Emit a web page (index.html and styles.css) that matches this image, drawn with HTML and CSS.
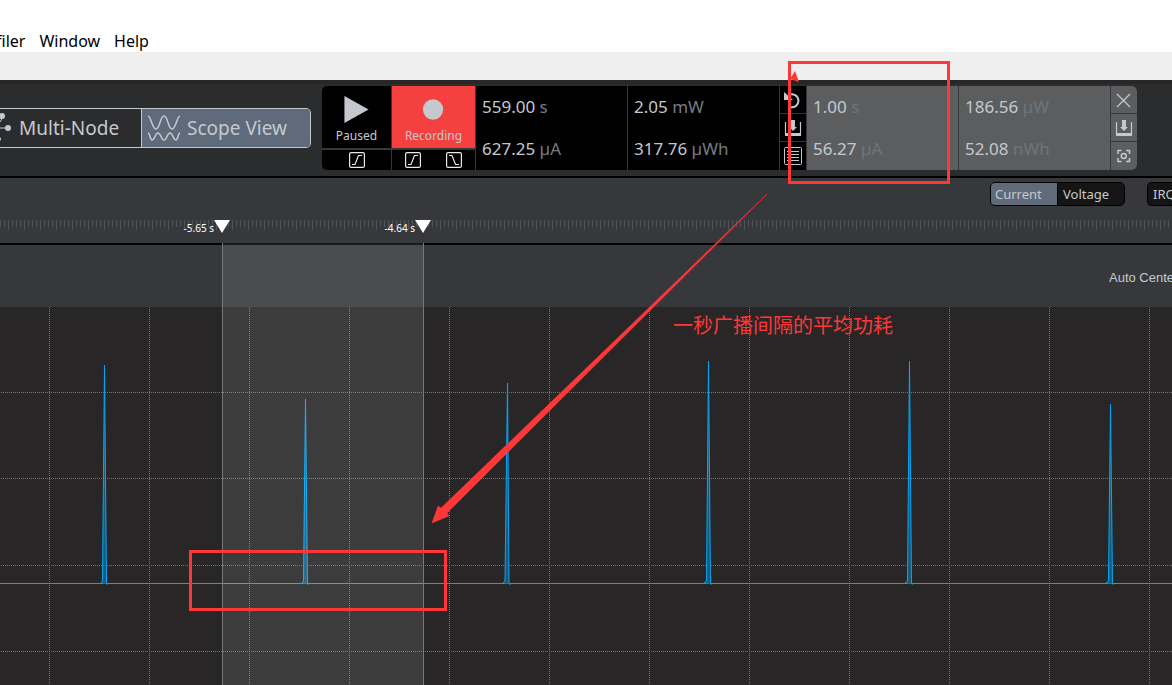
FILE: index.html
```
<!DOCTYPE html>
<html lang="en">
<head>
    <meta charset="UTF-8">
    <meta name="viewport" content="width=device-width, initial-scale=1.0">
    <title>Energy Profiler - Scope View</title>
    <link rel="stylesheet" href="styles.css">
</head>
<body>
    <nav class="menubar">
        <a href="#">filer</a>
        <a href="#">Window</a>
        <a href="#">Help</a>
    </nav>
    <div class="strip"></div>

    <header class="toolbar">
        <div class="tabs">
            <button class="tab tab-left">
                <svg width="12" height="32" viewBox="0 0 12 32">
                    <path d="M0 10 L3 5 M0 16 H8" stroke="#c5c9ce" fill="none"/>
                    <circle cx="2" cy="4" r="3" fill="#c5c9ce"/>
                    <circle cx="8" cy="16" r="3" fill="#c5c9ce"/>
                    <circle cx="-1" cy="27" r="2" fill="#c5c9ce"/>
                </svg>
                Multi-Node
            </button>
            <button class="tab active">
                <svg width="34" height="28" viewBox="0 0 34 28">
                    <path d="M1 2 C4 2 5 15 9 15 C13 15 13 2 17 2 C21 2 21 15 25 15 C29 15 30 2 33 2" stroke="#c5c9ce" stroke-width="1.5" fill="none"/>
                    <path d="M1 19 C3 19 3 26 5 26 C8 26 8 19 11 19 C14 19 14 26 17 26 C20 26 20 19 23 19 C26 19 26 26 29 26 C31 26 31 19 33 19" stroke="#c5c9ce" stroke-width="1.5" fill="none"/>
                </svg>
                Scope View
            </button>
        </div>

        <div class="panel">
            <div class="control control-play">
                <button class="action">
                    <svg width="28" height="30" viewBox="0 0 28 30"><path d="M1 1 L26 15 L1 29 Z" fill="#c5c9ce"/></svg>
                    Paused
                </button>
                <div class="triggers">
                    <button aria-label="Start on rising edge">
                        <svg width="16" height="16" viewBox="0 0 16 16"><use href="#rising"/></svg>
                    </button>
                </div>
            </div>
            <div class="control control-record">
                <button class="action recording">
                    <svg width="28" height="30" viewBox="0 0 28 30"><circle cx="13" cy="15" r="10.500" fill="#c5c9ce"/></svg>
                    Recording
                </button>
                <div class="triggers">
                    <button aria-label="Record on rising edge">
                        <svg width="16" height="16" viewBox="0 0 16 16"><use href="#rising"/></svg>
                    </button>
                    <button aria-label="Record on falling edge">
                        <svg width="16" height="16" viewBox="0 0 16 16"><use href="#falling"/></svg>
                    </button>
                </div>
            </div>
            <div class="values">
                <p>559.00 <span>s</span></p>
                <p>627.25 <span>µA</span></p>
            </div>
            <div class="values">
                <p>2.05 <span>mW</span></p>
                <p>317.76 <span>µWh</span></p>
            </div>
            <div class="tools">
                <button aria-label="Reset">
                    <svg width="18" height="18" viewBox="0 0 18 18">
                        <path d="M5 4 A6.500 6.500 0 1 1 6 16" stroke="#c5c9ce" stroke-width="2" fill="none"/>
                        <path d="M0 1 V9 H9 Z" fill="#c5c9ce"/>
                    </svg>
                </button>
                <button aria-label="Save">
                    <svg width="18" height="18" viewBox="0 0 18 18"><use href="#save"/></svg>
                </button>
                <button aria-label="Details">
                    <svg width="18" height="18" viewBox="0 0 18 18">
                        <rect x="0.500" y="0.500" width="17" height="17" rx="1" stroke="#c5c9ce" fill="none"/>
                        <path d="M3 4.500 h2 M6 4.500 h9 M3 7.500 h2 M6 7.500 h9 M3 10.500 h2 M6 10.500 h9 M3 13.500 h2 M6 13.500 h9" stroke="#c5c9ce"/>
                    </svg>
                </button>
            </div>
            <div class="values range">
                <p>1.00 <span>s</span></p>
                <p>56.27 <span>µA</span></p>
            </div>
            <div class="values range">
                <p>186.56 <span>µW</span></p>
                <p>52.08 <span>nWh</span></p>
            </div>
            <div class="tools range">
                <button aria-label="Close">
                    <svg width="18" height="18" viewBox="0 0 18 18"><path d="M2 3 L15 16 M15 3 L2 16" stroke="#c5c9ce" stroke-width="1.300"/></svg>
                </button>
                <button aria-label="Save range">
                    <svg width="18" height="18" viewBox="0 0 18 18"><use href="#save"/></svg>
                </button>
                <button aria-label="Zoom to range">
                    <svg width="18" height="18" viewBox="0 0 18 18">
                        <path d="M3 7 V3.500 H6.500 M11 3.500 H14.500 V7 M14.500 11 V14.500 H11 M6.500 14.500 H3 V11" stroke="#c5c9ce" stroke-width="1.500" fill="none"/>
                        <circle cx="8.750" cy="9" r="2.500" stroke="#c5c9ce" stroke-width="1.500" fill="none"/>
                    </svg>
                </button>
            </div>
        </div>
    </header>

    <main class="scope">
        <div class="options">
            <div class="toggle">
                <button class="active">Current</button>
                <button>Voltage</button>
            </div>
            <div class="toggle irq">
                <button>IRQ</button>
            </div>
        </div>
        <div class="ruler"></div>
        <div class="chart-head"><span>Auto Center</span></div>
        <svg class="plot" height="378">
            <defs>
                <pattern id="columns" x="49" width="100" height="2" patternUnits="userSpaceOnUse">
                    <rect width="1" height="1" fill="#757475"/>
                </pattern>
            </defs>
            <rect width="100%" height="100%" fill="url(#columns)"/>
            <g class="rows">
                <line x1="1" x2="100%" y1="85.500" y2="85.500"/>
                <line x1="1" x2="100%" y1="171.500" y2="171.500"/>
                <line x1="1" x2="100%" y1="258.500" y2="258.500"/>
                <line x1="1" x2="100%" y1="344.500" y2="344.500"/>
            </g>
            <line class="base" x1="0" x2="100%" y1="276.500" y2="276.500"/>
            <g class="spikes">
                <path d="M101 276 L102.500 274 L104.500 58 L106.500 277 H108"/>
                <path d="M302 276 L303.500 274 L305.500 92 L307.500 277 H309"/>
                <path d="M503 276 L505 274 L507.500 76 L509 277 H511"/>
                <path d="M704 276 L706.500 274 L708.500 54 L710.500 277 H712"/>
                <path d="M905 276 L907.500 274 L909.500 54 L911.500 277 H913"/>
                <path d="M1106 276 L1108.500 274 L1110.500 97 L1112.500 277 H1114"/>
            </g>
        </svg>

        <div class="selection">
            <span class="marker marker-start">-5.65 s</span>
            <span class="marker marker-end">-4.64 s</span>
        </div>
    </main>

    <!-- Notes drawn over the scope -->
    <div class="note-box note-values"></div>
    <div class="note-box note-baseline"></div>
    <svg class="note-arrow" viewBox="0 0 1172 685">
        <path d="M767 194 L447 513 L449 516 L432 523 L438 506 L441 508 Z" fill="#ff3737" stroke="#ff3737" stroke-width="0.500"/>
        <path d="M790 79 L795 71 L799 82 Z" fill="#ff3737"/>
    </svg>
    <p class="note-text" lang="zh">一秒广播间隔的平均功耗</p>

    <svg width="0" height="0" class="symbols">
        <symbol id="rising" viewBox="0 0 16 16">
            <rect x="0.600" y="0.600" width="14.800" height="14.800" rx="1.500" stroke="#e8eaec" stroke-width="1.200" fill="none"/>
            <path d="M3 12.500 H6 L9.500 3.500 H13" stroke="#e8eaec" stroke-width="1.200" fill="none"/>
        </symbol>
        <symbol id="falling" viewBox="0 0 16 16">
            <rect x="0.600" y="0.600" width="14.800" height="14.800" rx="1.500" stroke="#e8eaec" stroke-width="1.200" fill="none"/>
            <path d="M3 3.500 H6 L9.500 12.500 H13" stroke="#e8eaec" stroke-width="1.200" fill="none"/>
        </symbol>
        <symbol id="save" viewBox="0 0 18 18">
            <path d="M1.500 3 V15 H16.500 V3" stroke="#c5c9ce" stroke-width="1.200" fill="none"/>
            <path d="M1 14 H17 V17 H1 Z M7 1 H11 V8 H13 L9 12 L5 8 H7 Z" fill="#c5c9ce"/>
        </symbol>
    </svg>
</body>
</html>
```
FILE: styles.css
```
* {
    box-sizing: border-box;
}
body {
    margin: 0;
    position: relative;
    min-height: 100vh;
    overflow: hidden;
    display: flex;
    flex-direction: column;
    background-color: #282627;
    font-family: "Noto Sans", "Noto Sans CJK SC", sans-serif;
    color: #c5c9ce;
}
button {
    margin: 0;
    padding: 0;
    border: none;
    background: none;
    color: inherit;
    font-family: inherit;
    cursor: pointer;
}
p {
    margin: 0;
}

.menubar {
    height: 52px;
    padding-top: 30px;
    margin-left: -4px;
    display: flex;
    gap: 14px;
    background-color: #fff;
    font-size: 16px;
    line-height: 22px;
}
.menubar a {
    color: #000;
    text-decoration: none;
}
.strip {
    height: 28px;
    background-color: #efefef;
}

/* Toolbar */
.toolbar {
    height: 98px;
    display: flex;
    align-items: flex-start;
    gap: 11px;
    padding-top: 2px;
    border-top: 4px solid #282627;
    border-bottom: 2px solid #000;
    background-color: #2b2c2e;
}
.tabs {
    display: flex;
    height: 40px;
    width: 311px;
    margin-top: 22px;
    border: 1px solid #c5c9ce;
    border-left: none;
    border-radius: 0 5px 5px 0;
    overflow: hidden;
}
.tab {
    display: flex;
    align-items: center;
    font-size: 19px;
}
.tab-left {
    width: 142px;
    gap: 7px;
    border-right: 1px solid #c5c9ce;
}
.tab.active {
    flex: 1;
    gap: 6px;
    padding-left: 5px;
    background-color: #5f6b7a;
}
.panel {
    display: flex;
    height: 84px;
    border-radius: 5px;
    overflow: hidden;
    background-color: #000;
}
.control {
    display: flex;
    flex-direction: column;
    border-right: 1px solid #37383b;
}
.control-play {
    width: 70px;
}
.control-record {
    width: 84px;
}
.action {
    height: 62px;
    padding-top: 9px;
    display: flex;
    flex-direction: column;
    align-items: center;
    font-size: 12px;
    line-height: 24px;
}
.recording {
    background-color: #f54040;
}
.triggers {
    flex: 1;
    display: flex;
    justify-content: space-around;
    align-items: center;
    border-top: 2px solid #37383b;
}
.triggers button,
.tools button {
    display: flex;
    justify-content: center;
    align-items: center;
}
.values {
    width: 152px;
    padding-left: 6px;
    border-right: 1px solid #37383b;
    font-size: 17px;
    line-height: 42px;
}
.values span {
    color: #747d83;
}
.tools {
    width: 27px;
    display: flex;
    flex-direction: column;
    border-right: 1px solid #37383b;
}
.tools button {
    height: 28px;
    border-bottom: 1px solid #37383b;
}
.tools button:last-child {
    border-bottom: none;
}
.range {
    background-color: #5c5d5f;
}
.values.range span {
    color: #6c757b;
}
.tools.range {
    width: 26px;
    border-right: none;
}

/* Scope */
.scope {
    position: relative;
    flex: 1;
    display: flex;
    flex-direction: column;
}
.options {
    height: 42px;
    padding-top: 4px;
    display: flex;
    justify-content: flex-end;
    gap: 22px;
    background-color: #37383b;
}
.toggle {
    height: 24px;
    width: 135px;
    display: flex;
    border: 1px solid #000;
    border-radius: 5px;
    overflow: hidden;
    background-color: #151515;
}
.toggle button {
    padding: 0 5px;
    font-size: 13px;
}
.toggle .active {
    width: 67px;
    padding: 0 4px;
    text-align: left;
    border-right: 1px solid #000;
    background-color: #5f6b7a;
}
.toggle.irq {
    width: 25px;
    border-right: none;
    border-radius: 5px 0 0 5px;
}
.ruler {
    height: 25px;
    border-bottom: 2px solid #000;
    background-color: #37383b;
    background-image:
        repeating-linear-gradient(to right, #515255 0 1px, transparent 1px 4px),
        repeating-linear-gradient(to right, transparent 0 8px, #515255 8px 9px, transparent 9px 16px);
    background-size: 100% 7px, 100% 10px;
    background-repeat: no-repeat;
}
.chart-head {
    height: 62px;
    display: flex;
    justify-content: flex-end;
    background-color: #37383b;
    font-family: "Liberation Sans", Arial, sans-serif;
    font-size: 13px;
    line-height: 66px;
}
.chart-head span {
    width: 63px;
    overflow: hidden;
    white-space: nowrap;
}
.plot {
    display: block;
    width: 100%;
    background-color: #282627;
}
.rows line {
    stroke: #757475;
    stroke-dasharray: 1 1;
}
.base {
    stroke: #12a2e8;
}
.spikes path {
    fill: #1a5878;
    stroke: #06a6f7;
    stroke-width: 1;
}
.selection {
    position: absolute;
    top: 65px;
    bottom: 0;
    left: 222px;
    width: 202px;
    border-left: 1px solid #777879;
    border-right: 1px solid #777879;
    background-color: rgba(255, 255, 255, 0.1);
}
.marker {
    position: absolute;
    top: -23px;
    padding-right: 16px;
    color: #fff;
    font-size: 10px;
    line-height: 16px;
    white-space: nowrap;
}
.marker-start {
    right: 193px;
}
.marker-end {
    right: -8px;
}
.marker::after {
    content: "";
    position: absolute;
    top: 0;
    right: 0;
    border: 8px solid transparent;
    border-top: 13px solid #fff;
    border-bottom: none;
}

/* Notes */
.note-box {
    position: absolute;
    border: 3px solid #ff3737;
}
.note-values {
    left: 788px;
    top: 61px;
    width: 162px;
    height: 123px;
}
.note-baseline {
    left: 189px;
    top: 550px;
    width: 258px;
    height: 61px;
}
.note-arrow {
    position: absolute;
    left: 0;
    top: 0;
    width: 1172px;
    pointer-events: none;
}
.note-text {
    position: absolute;
    left: 673px;
    top: 310px;
    font-family: "Noto Sans CJK SC", sans-serif;
    font-size: 20px;
    line-height: 30px;
    color: #ff3737;
    white-space: nowrap;
}
.symbols {
    position: absolute;
}
```
